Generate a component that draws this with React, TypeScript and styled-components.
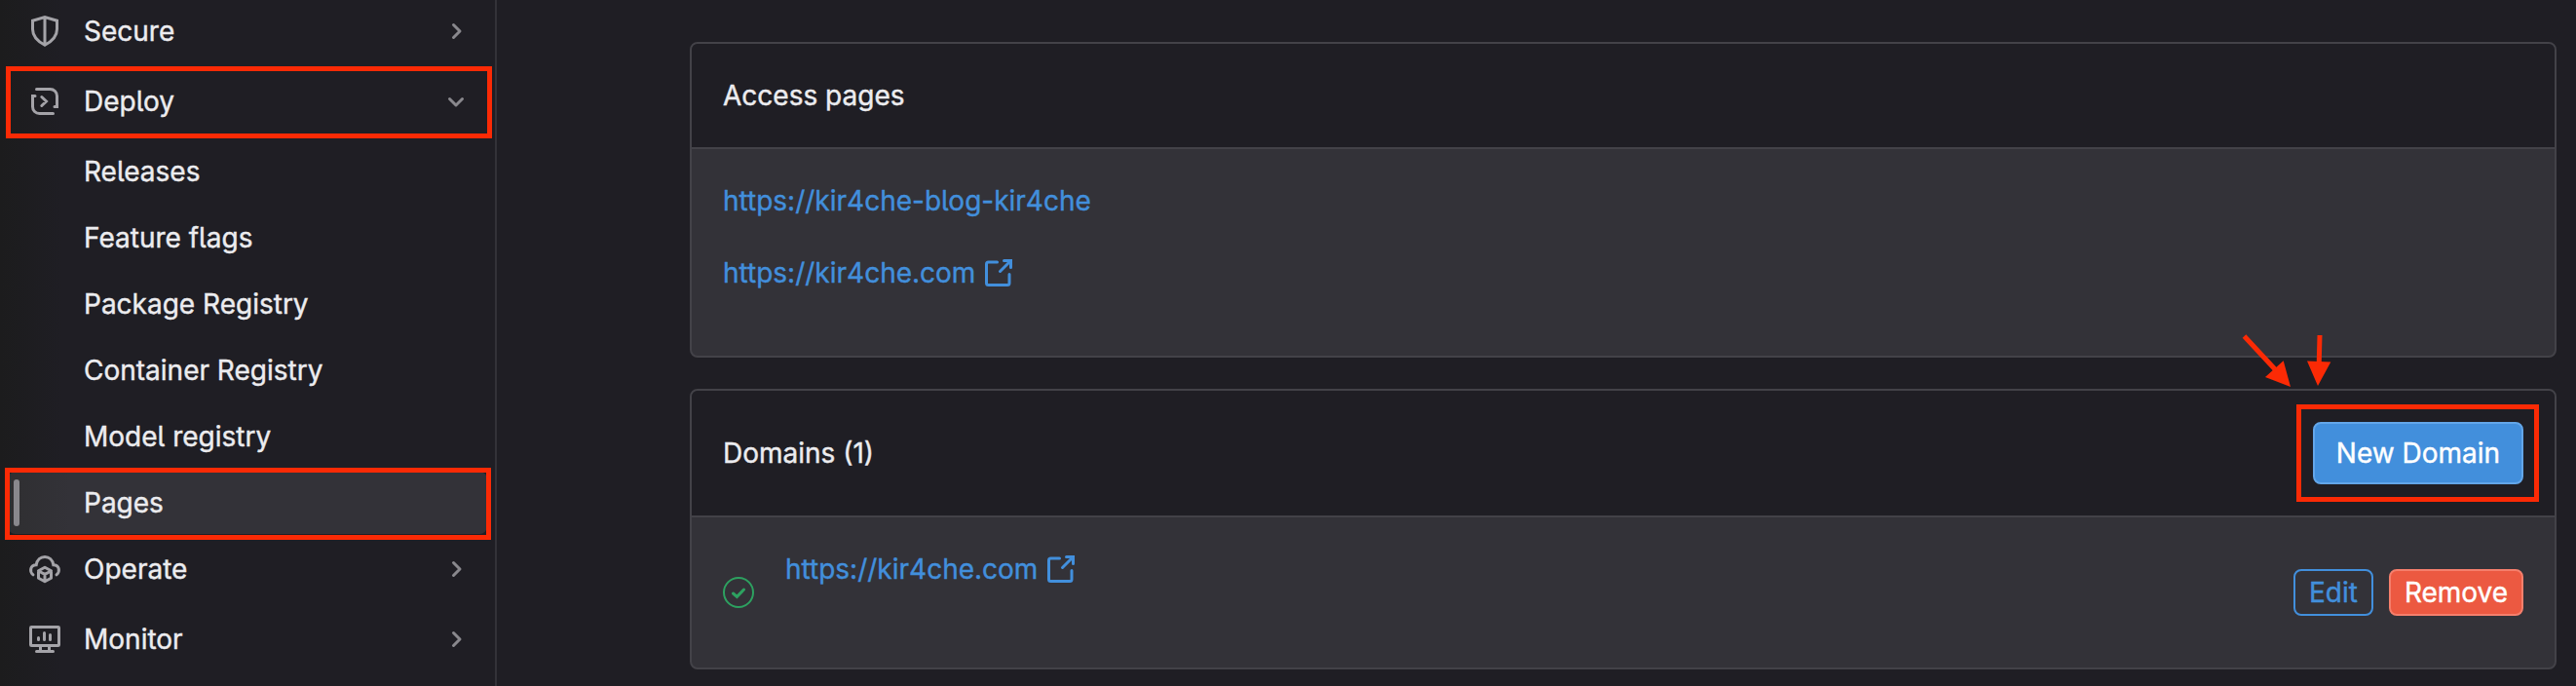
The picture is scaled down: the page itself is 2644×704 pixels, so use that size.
import React from 'react';
import styled, { createGlobalStyle, css } from 'styled-components';

const GlobalStyle = createGlobalStyle`
  *, *::before, *::after { box-sizing: border-box; }
  html, body { margin: 0; padding: 0; background: #1f1e24; overflow: hidden; }
  body {
    font-family: Inter, 'Liberation Sans', sans-serif;
    font-feature-settings: 'cv05' 1;
    font-size: 28px;
    line-height: 42px;
    color: #ececef;
    -webkit-text-stroke: 0.4px currentColor;
  }
`;

const Page = styled.div`
  position: relative;
  display: flex;
  width: 2644px;
  height: 704px;
  overflow: hidden;
  background: #1f1e24;
`;

const Sidebar = styled.nav`
  flex: none;
  width: 510px;
  display: flex;
  flex-direction: column;
  gap: 8px;
  border-right: 2px solid #333238;
  background: linear-gradient(90deg, #1c1c1d 0, #1f1e24 64px);
`;

const SubList = styled.div`
  display: flex;
  flex-direction: column;
  gap: 4px;
  margin-bottom: -4px;
`;

const NavRow = styled.a`
  display: flex;
  align-items: center;
  height: 64px;
  margin: 0 8px;
  padding: 0 16px 0 22px;
  gap: 24px;
`;

const SubRow = styled.a<{ $active?: boolean }>`
  display: flex;
  align-items: center;
  height: 64px;
  margin: 0 8px;
  padding-left: 6px;
  border-radius: 8px;
  ${(p) =>
    p.$active &&
    css`
      background: linear-gradient(90deg, #2f2f31 0, #333238 64px);
    `}
`;

const ActiveBar = styled.span<{ $active?: boolean }>`
  width: 6px;
  height: 48px;
  margin-right: 66px;
  border-radius: 3px;
  background: ${(p) => (p.$active ? '#89888d' : 'transparent')};
`;

const NavLabel = styled.span`
  flex: 1;
  white-space: nowrap;
`;

const Icon = styled.svg<{ $color?: string }>`
  flex: none;
  display: block;
  width: 32px;
  height: 32px;
  fill: none;
  stroke: ${(p) => p.$color ?? '#a4a3a8'};
  stroke-width: 1.5;
  overflow: visible;
`;

const Main = styled.main`
  flex: 1;
  display: flex;
  flex-direction: column;
  gap: 32px;
  padding: 43px 20px 0 198px;
`;

const Card = styled.section`
  border: 2px solid #434248;
  border-radius: 8px;
  overflow: hidden;
  background: #333238;
`;

const CardHeader = styled.header`
  display: flex;
  align-items: center;
  justify-content: space-between;
  padding: 32px;
  border-bottom: 2px solid #434248;
  background: #1f1e24;
`;

const LinkList = styled.div`
  display: flex;
  flex-direction: column;
  gap: 32px;
  padding: 32px 32px 64px;
`;

const Link = styled.a`
  display: inline-flex;
  align-items: center;
  gap: 8px;
  height: 42px;
  color: #428fdc;
  white-space: nowrap;
`;

const DomainRow = styled.div`
  display: flex;
  align-items: center;
  height: 154px;
  padding: 32px;
`;

const DomainName = styled.div`
  flex: 1;
  align-self: flex-start;
  display: flex;
  margin-left: 32px;
`;

const Actions = styled.div`
  display: flex;
  gap: 16px;
`;

const tones = {
  confirm: css`color: #fff; background: #428fdc; border-color: #63a6e9;`,
  outline: css`color: #428fdc; background: transparent; border-color: #428fdc;`,
  danger: css`color: #fff; background: #ec5941; border-color: #f57f6c;`,
};

const Button = styled.button<{ $tone: keyof typeof tones; $width: number; $large?: boolean }>`
  display: flex;
  align-items: center;
  justify-content: center;
  width: ${(p) => p.$width}px;
  height: ${(p) => (p.$large ? 64 : 48)}px;
  padding: 0;
  border: 2px solid;
  border-radius: 8px;
  font: inherit;
  font-feature-settings: inherit;
  white-space: nowrap;
  ${(p) => tones[p.$tone]}
`;

const Highlight = styled.div<{ $x: number; $y: number; $w: number; $h: number }>`
  position: absolute;
  left: ${(p) => p.$x}px;
  top: ${(p) => p.$y}px;
  width: ${(p) => p.$w}px;
  height: ${(p) => p.$h}px;
  border: 5px solid #fb2a05;
`;

const Arrows = styled.svg`
  position: absolute;
  left: 2296px;
  top: 336px;
  width: 108px;
  height: 68px;
  fill: #fb2a05;
  stroke: #fb2a05;
`;

const ShieldIcon = () => (
  <Icon viewBox="0 0 16 16">
    <path d="M1.75 2.6 8 .8l6.25 1.8V7c0 3.5-2.2 6-6.25 8.15C3.95 13 1.75 10.5 1.75 7V2.6ZM8 1v14" />
  </Icon>
);

const DeployIcon = () => (
  <Icon viewBox="0 0 16 16" strokeLinecap="round">
    <path d="M3.75 1.75h7a3.5 3.5 0 0 1 3.5 3.5v5.5h-1.25M3 5.25H1.75v5.5a3.5 3.5 0 0 0 3.5 3.5h7M6.4 5.75 8.75 8 6.4 10.25" />
  </Icon>
);

const OperateIcon = () => (
  <Icon viewBox="0 0 16 16" strokeLinecap="round">
    <path d="M2 10.9C-.1 9.2.6 5.9 3.6 5.9 4 3.2 5.8 1.75 8 1.75S12 3.2 12.4 5.9c3 0 3.7 3.3 1.6 5" />
    <path d="m8 7.1 3.25 1.8v3.7L8 14.4l-3.25-1.8V8.9L8 7.1ZM4.75 9 8 10.7 11.25 9M8 10.7v3.6" strokeLinejoin="round" />
  </Icon>
);

const MonitorIcon = () => (
  <Icon viewBox="0 0 16 16" strokeLinecap="round">
    <rect x=".75" y="1.75" width="14.5" height="9.5" rx=".4" />
    <path d="M4.75 7.2v1.1M7.75 4.75v3.55M10.75 5.75v2.55M3.75 14.25h8.5M5.75 12v1.5M10.25 12v1.5" />
  </Icon>
);

const Chevron = ({ open }: { open?: boolean }) => (
  <Icon viewBox="0 0 16 16" $color="#89888d" strokeLinecap="round" strokeLinejoin="round">
    <path d={open ? 'M4.75 6.75 8 10l3.25-3.25' : 'M6.75 4.75 10 8l-3.25 3.25'} />
  </Icon>
);

const ExternalIcon = () => (
  <Icon viewBox="0 0 16 16" $color="#428fdc" strokeLinecap="round">
    <path d="M7.25 2.5h-4.5a1 1 0 0 0-1 1v9.75a1 1 0 0 0 1 1h9.75a1 1 0 0 0 1-1v-4.5M8.75 7.25l5-5" />
    <path d="M10.75 1.75h3.5v3.5" />
  </Icon>
);

const VerifiedIcon = () => (
  <Icon viewBox="0 0 16 16" $color="#2da160" strokeLinecap="round">
    <circle cx="8" cy="8" r="7.5" strokeWidth="1" />
    <path d="M5.25 8.5 7.2 10.2 10.75 6.5" />
  </Icon>
);

const NavItem = ({ icon, label, open }: { icon: React.ReactNode; label: string; open?: boolean }) => (
  <NavRow>
    {icon}
    <NavLabel>{label}</NavLabel>
    <Chevron open={open} />
  </NavRow>
);

const deployItems = ['Releases', 'Feature flags', 'Package Registry', 'Container Registry', 'Model registry', 'Pages'];

export default function App() {
  return (
    <>
      <GlobalStyle />
      <Page>
        <Sidebar>
          <NavItem icon={<ShieldIcon />} label="Secure" />
          <NavItem icon={<DeployIcon />} label="Deploy" open />
          <SubList>
            {deployItems.map((label) => (
              <SubRow key={label} $active={label === 'Pages'}>
                <ActiveBar $active={label === 'Pages'} />
                <NavLabel>{label}</NavLabel>
              </SubRow>
            ))}
          </SubList>
          <NavItem icon={<OperateIcon />} label="Operate" />
          <NavItem icon={<MonitorIcon />} label="Monitor" />
        </Sidebar>
        <Main>
          <Card>
            <CardHeader>Access pages</CardHeader>
            <LinkList>
              <Link>https://kir4che-blog-kir4che</Link>
              <Link>
                https://kir4che.com
                <ExternalIcon />
              </Link>
            </LinkList>
          </Card>
          <Card>
            <CardHeader>
              Domains (1)
              <Button $tone="confirm" $width={216} $large>New Domain</Button>
            </CardHeader>
            <DomainRow>
              <VerifiedIcon />
              <DomainName>
                <Link>
                  https://kir4che.com
                  <ExternalIcon />
                </Link>
              </DomainName>
              <Actions>
                <Button $tone="outline" $width={82}>Edit</Button>
                <Button $tone="danger" $width={138}>Remove</Button>
              </Actions>
            </DomainRow>
          </Card>
        </Main>
        <Highlight $x={6} $y={68} $w={499} $h={74} />
        <Highlight $x={5} $y={480} $w={499} $h={74} />
        <Highlight $x={2357} $y={415} $w={249} $h={100} />
        <Arrows viewBox="2296 336 108 68">
          <path d="M2303.5 345 2336 380M2381 344l-.8 30" strokeWidth="5" />
          <path d="m2351 397-26-10 18.7-16.8zM2379 396l-11-25.5 24.3 1z" stroke="none" />
        </Arrows>
      </Page>
    </>
  );
}
